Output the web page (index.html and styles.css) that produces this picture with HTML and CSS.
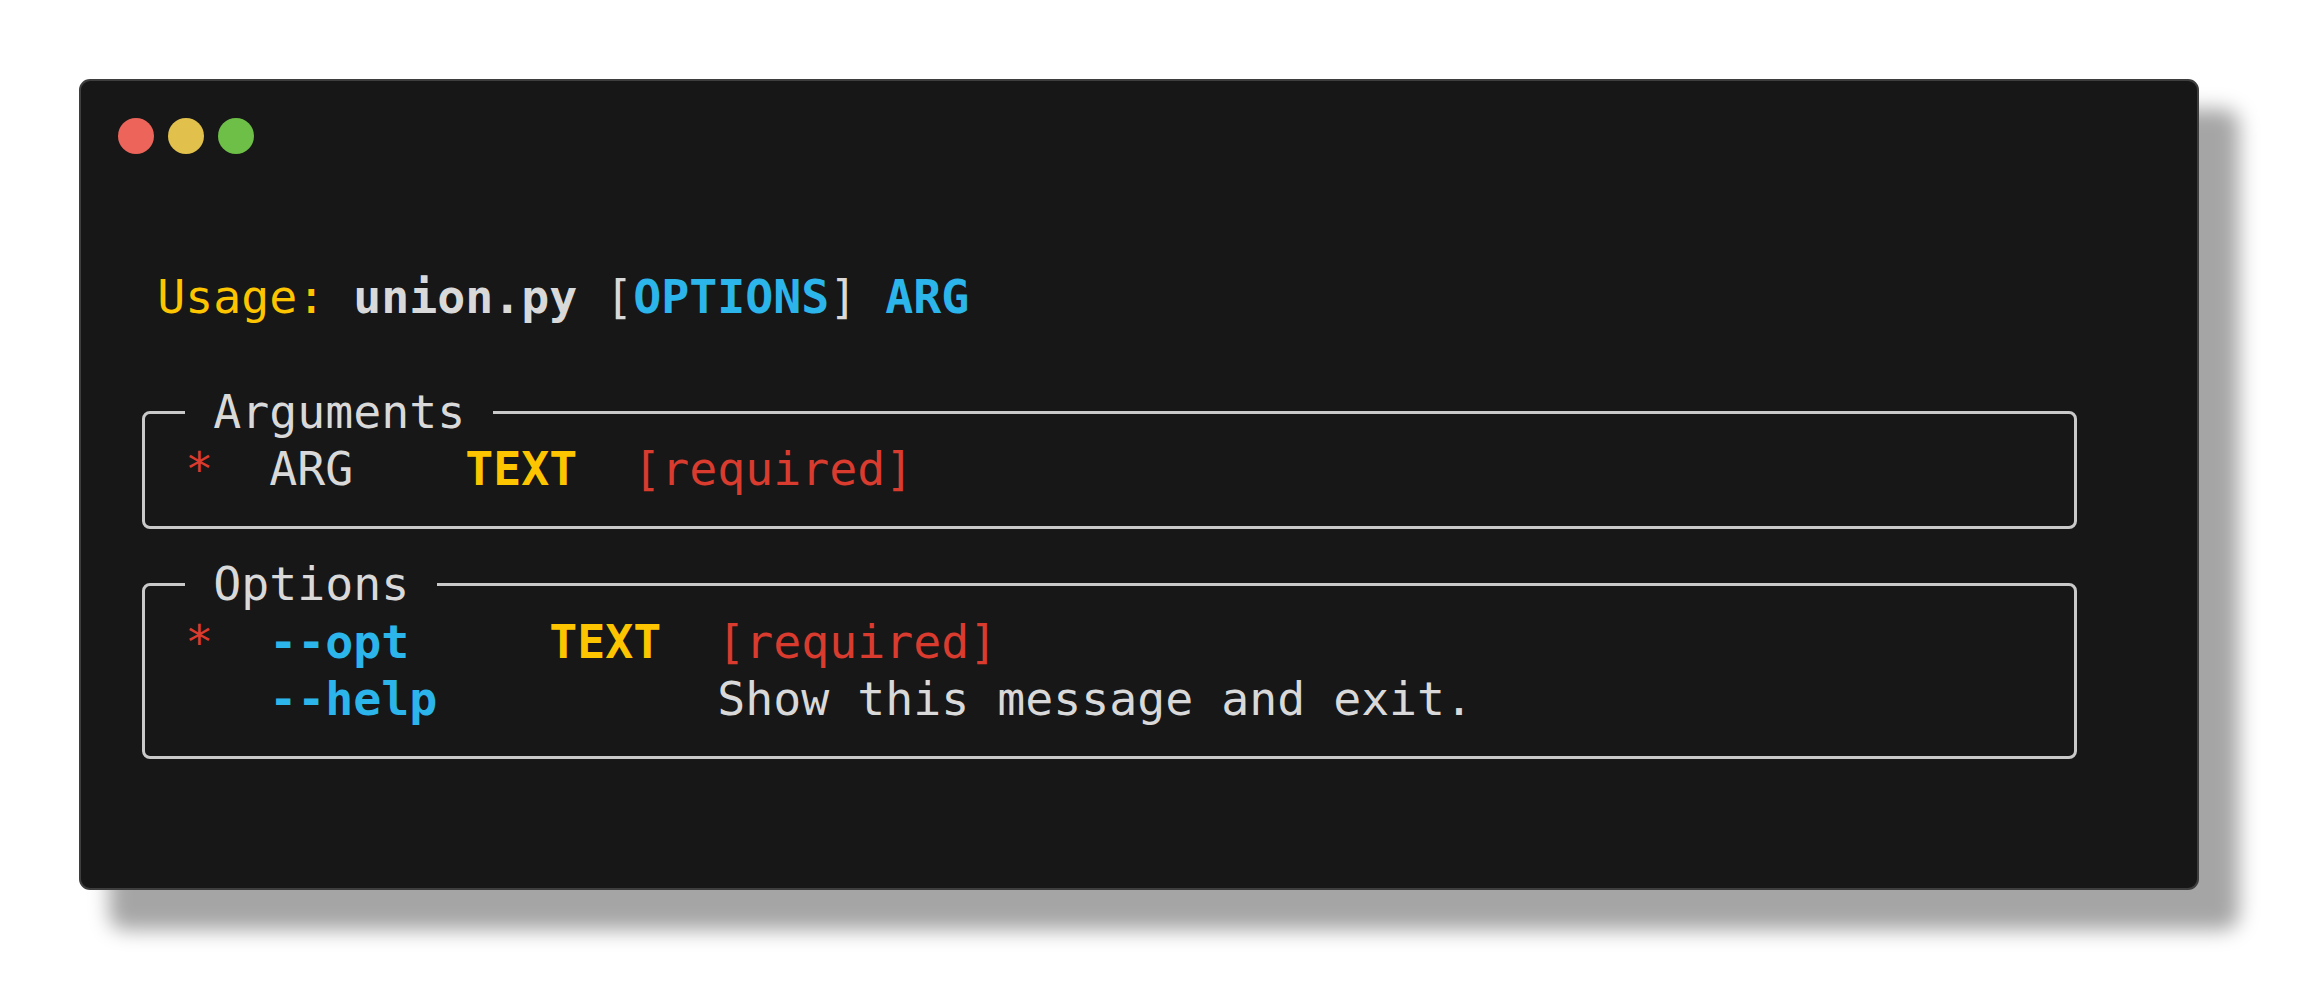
FILE: index.html
```html
<!DOCTYPE html>
<html lang="en">
<head>
<meta charset="utf-8">
<title>union.py --help</title>
<link rel="stylesheet" href="styles.css">
</head>
<body>
<div class="window">
  <div class="titlebar">
    <span class="dot dot-red"></span>
    <span class="dot dot-yellow"></span>
    <span class="dot dot-green"></span>
  </div>
  <div class="terminal">
    <div class="line"> <span class="yellow">Usage:</span> <span class="bold">union.py</span> [<span class="blue bold">OPTIONS</span>] <span class="blue bold">ARG</span></div>
    <div class="line"></div>
    <fieldset class="panel">
      <legend class="panel-title">Arguments</legend>
      <div class="line"><span class="red">*</span>  ARG    <span class="yellow bold">TEXT</span>  <span class="red">[required]</span></div>
    </fieldset>
    <fieldset class="panel">
      <legend class="panel-title">Options</legend>
      <div class="line"><span class="red">*</span>  <span class="blue bold">--opt</span>     <span class="yellow bold">TEXT</span>  <span class="red">[required]</span></div>
      <div class="line">   <span class="blue bold">--help</span>          Show this message and exit.</div>
    </fieldset>
  </div>
</div>
</body>
</html>
```
FILE: styles.css
```css
:root {
  --lh: 57.43px;
  --cw: 28px;
  --fg: #d9d9d9;
  --line: #c9c9c9;
}

* {
  box-sizing: border-box;
}

html {
  margin: 0;
  padding: 0;
  background: #ffffff;
  overflow: hidden;
}

body {
  margin: 0;
  min-height: 100vh;
  font-family: "DejaVu Sans Mono", "Liberation Mono", monospace;
  padding: 79.3px 0 0 79.3px;
}

.window {
  width: 2120px;
  background: #171717;
  border: 2px solid #3e3e3e;
  border-radius: 11px;
  box-shadow: 35px 35px 20px 5px rgba(0, 0, 0, 0.353);
  padding: 0 0 102px 48px;
}

.titlebar {
  display: flex;
  gap: 14px;
  padding-top: 36.7px;
  margin-left: -11.3px;
}

.dot {
  width: 36px;
  height: 36px;
  border-radius: 50%;
}

.dot-red { background: #ed655a; }
.dot-yellow { background: #e1c14c; }
.dot-green { background: #6dbf47; }

.terminal {
  margin-top: 115.1px;
  font-size: 46.51px;
  line-height: var(--lh);
  color: var(--fg);
}

.line {
  white-space: pre;
  min-height: var(--lh);
}

.panel {
  margin: 0 0 27.215px 12.5px;
  width: calc(69 * var(--cw) + 3px);
  min-inline-size: 0;
  border: 3px solid var(--line);
  border-radius: 8px;
  padding: 0 0 27.215px 40.5px;
}

.panel-title {
  padding: 0 var(--cw);
  margin: 0;
  line-height: var(--lh);
  white-space: pre;
  color: var(--fg);
}

.bold { font-weight: bold; }
.yellow { color: #fdc500; }
.blue { color: #2bb5ea; }
.red { color: #d93b2e; }
```
